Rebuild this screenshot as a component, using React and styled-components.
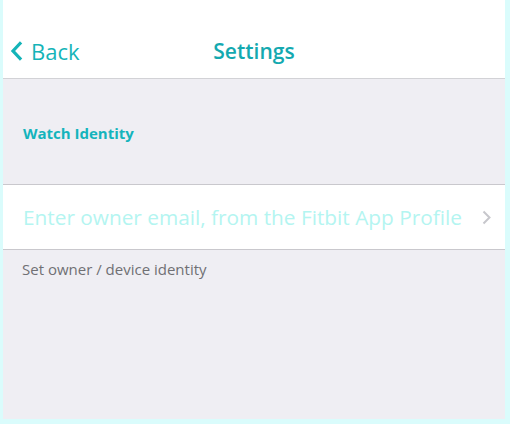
import React from 'react';
import styled, { createGlobalStyle } from 'styled-components';

const Global = createGlobalStyle`
  html, body {
    margin: 0;
    padding: 0;
    background: #dafcfc;
  }
  body {
    font-family: "Open Sans", "Liberation Sans", sans-serif;
    -webkit-font-smoothing: antialiased;
  }
`;

const Page = styled.div`
  margin-left: 3px;
  width: 502px;
  height: 419px;
  background: #efeef3;
  display: flex;
  flex-direction: column;
`;

const Header = styled.header`
  height: 79px;
  flex-shrink: 0;
  box-sizing: border-box;
  background: #fff;
  border-bottom: 1px solid #d2d2d6;
  display: grid;
  grid-template-columns: 1fr auto 1fr;
  align-items: center;
  padding-top: 24px;
`;

const BackButton = styled.button`
  justify-self: start;
  display: flex;
  align-items: center;
  gap: 8px;
  border: none;
  background: none;
  padding: 0 0 0 6px;
  color: #14b4b8;
  font: inherit;
  font-size: 22px;
  cursor: pointer;
`;

const Title = styled.h1`
  margin: 0;
  font-size: 21px;
  font-weight: 600;
  color: #14a9b0;
`;

const SectionTitle = styled.h2`
  margin: 0;
  box-sizing: border-box;
  padding: 44px 20px 0;
  height: 105px;
  font-size: 15px;
  font-weight: 700;
  color: #14b4bc;
`;

const Row = styled.div`
  height: 64px;
  background: #fff;
  border-top: 1px solid #c9c8cd;
  border-bottom: 1px solid #c9c8cd;
  display: flex;
  align-items: center;
  padding: 0 14px 0 20px;
`;

const Placeholder = styled.span`
  flex: 1;
  font-size: 20.8px;
  color: #b4f5f1;
  white-space: nowrap;
`;

const Hint = styled.p`
  margin: 0;
  padding: 9px 19px;
  font-size: 15px;
  color: #707074;
`;

const ChevronLeft = () => (
  <svg width="14" height="20" viewBox="0 0 14 20" fill="none">
    <path d="M11 2.5 L4 10 L11 17.5" stroke="currentColor" strokeWidth="3.2" strokeLinecap="square" />
  </svg>
);

const ChevronRight = () => (
  <svg width="9" height="15" viewBox="0 0 9 15" fill="none">
    <path d="M1.5 1.5 L7.5 7.5 L1.5 13.5" stroke="#c7c7cc" strokeWidth="2" />
  </svg>
);

export default function App() {
  return (
    <>
      <Global />
      <Page>
        <Header>
          <BackButton>
            <ChevronLeft />
            Back
          </BackButton>
          <Title>Settings</Title>
          <div />
        </Header>
        <SectionTitle>Watch Identity</SectionTitle>
        <Row>
          <Placeholder>Enter owner email, from the Fitbit App Profile</Placeholder>
          <ChevronRight />
        </Row>
        <Hint>Set owner / device identity</Hint>
      </Page>
    </>
  );
}
